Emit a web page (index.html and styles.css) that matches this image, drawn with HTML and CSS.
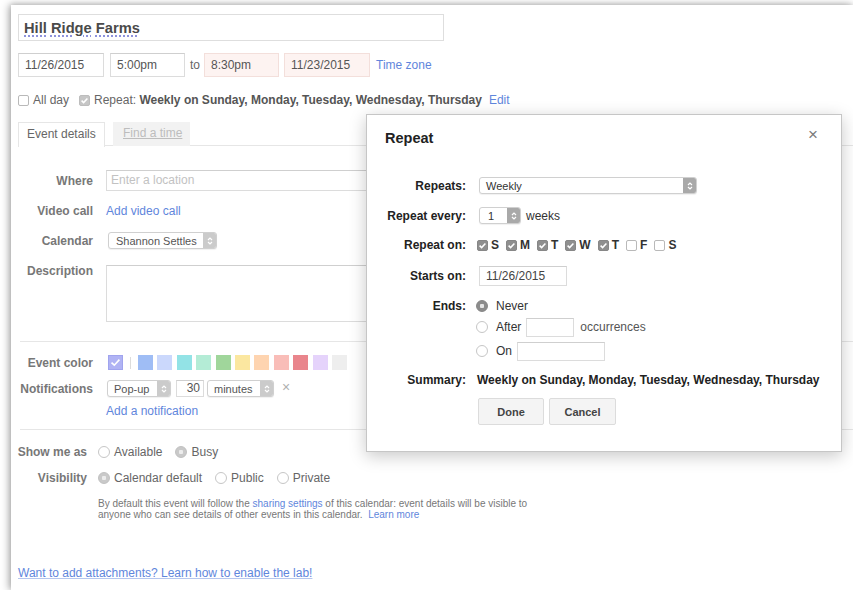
FILE: index.html
```html
<!DOCTYPE html>
<html>
<head>
<meta charset="utf-8">
<title>Hill Ridge Farms</title>
<link rel="stylesheet" href="styles.css">
</head>
<body>
<div class="window">
  <div class="title-box"><span class="title"><span class="sp">Hill</span> <span class="sp">Ridge</span> <span class="sp">Farms</span></span></div>

  <div class="when">
    <div class="field date">11/26/2015</div>
    <div class="field time">5:00pm</div>
    <span class="to">to</span>
    <div class="field time warn">8:30pm</div>
    <div class="field date warn">11/23/2015</div>
    <a class="link tz">Time zone</a>
  </div>

  <div class="recur">
    <span class="check"></span><span class="allday">All day</span>
    <span class="check on light"><svg viewBox="0 0 11 11" width="11" height="11"><path d="M2.6 5.6 L4.6 7.6 L8.4 3.4" fill="none" stroke="#fff" stroke-width="1.5"/></svg></span>
    <span class="rep">Repeat: <b>Weekly on Sunday, Monday, Tuesday, Wednesday, Thursday</b></span>
    <a class="link edit">Edit</a>
  </div>

  <div class="tabs">
    <div class="tab active">Event details</div>
    <div class="tab idle"><span>Find a time</span></div>
  </div>

  <div class="details">
    <div class="row r-where">
      <span class="label">Where</span>
      <div class="field where">Enter a location</div>
    </div>
    <div class="row r-video">
      <span class="label">Video call</span>
      <a class="link">Add video call</a>
    </div>
    <div class="row r-cal">
      <span class="label">Calendar</span>
      <span class="select cal">Shannon Settles<span class="stepper"><svg viewBox="0 0 8 10" width="8" height="10"><path d="M2 4 L4 2 L6 4 M2 6 L4 8 L6 6" fill="none" stroke="#fff" stroke-width="1.2"/></svg></span></span>
    </div>
    <div class="row r-desc">
      <span class="label">Description</span>
      <div class="field desc"></div>
    </div>

    <div class="rule r1"></div>

    <div class="row r-color">
      <span class="label">Event color</span>
      <span class="swatch-pick"><svg viewBox="0 0 15 15" width="15" height="15"><path d="M3.5 7.6 L6.3 10.2 L11.4 4.6" fill="none" stroke="#fff" stroke-width="1.6"/></svg></span>
      <span class="sep"></span>
      <span class="swatches">
        <span class="sw" style="background:#9fbdf5"></span>
        <span class="sw" style="background:#cbd8fc"></span>
        <span class="sw" style="background:#93e3e6"></span>
        <span class="sw" style="background:#b4ecd6"></span>
        <span class="sw" style="background:#a0d69b"></span>
        <span class="sw" style="background:#fbe7a0"></span>
        <span class="sw" style="background:#fed4b0"></span>
        <span class="sw" style="background:#f9bdb8"></span>
        <span class="sw" style="background:#e9858c"></span>
        <span class="sw" style="background:#e5d3fb"></span>
        <span class="sw" style="background:#eeeeee"></span>
      </span>
    </div>
    <div class="row r-notif">
      <span class="label">Notifications</span>
      <span class="select popup">Pop-up<span class="stepper"><svg viewBox="0 0 8 10" width="8" height="10"><path d="M2 4 L4 2 L6 4 M2 6 L4 8 L6 6" fill="none" stroke="#fff" stroke-width="1.2"/></svg></span></span>
      <span class="field num">30</span>
      <span class="select minutes">minutes<span class="stepper"><svg viewBox="0 0 8 10" width="8" height="10"><path d="M2 4 L4 2 L6 4 M2 6 L4 8 L6 6" fill="none" stroke="#fff" stroke-width="1.2"/></svg></span></span>
      <span class="remove">×</span>
    </div>
    <div class="row r-add">
      <span class="label"></span>
      <a class="link">Add a notification</a>
    </div>

    <div class="rule r2"></div>

    <div class="row2 r-show">
      <span class="label">Show me as</span>
      <span class="radio"></span><span class="opt">Available</span>
      <span class="radio on"></span><span class="opt">Busy</span>
    </div>
    <div class="row2 r-vis">
      <span class="label">Visibility</span>
      <span class="radio on"></span><span class="opt">Calendar default</span>
      <span class="radio"></span><span class="opt">Public</span>
      <span class="radio"></span><span class="opt">Private</span>
    </div>
    <p class="info">By default this event will follow the <a class="link">sharing settings</a> of this calendar: event details will be visible to<br>anyone who can see details of other events in this calendar.&nbsp; <a class="link">Learn more</a></p>

    <a class="link lab">Want to add attachments? Learn how to enable the lab!</a>
  </div>
</div>

<div class="dialog">
  <div class="dlg-head">
    <span class="dlg-title">Repeat</span>
    <span class="dlg-close">×</span>
  </div>
  <div class="dlg-body">
    <div class="drow d-repeats">
      <span class="dlabel">Repeats:</span>
      <span class="select dsel weekly">Weekly<span class="stepper dark"><svg viewBox="0 0 8 10" width="8" height="10"><path d="M2 4 L4 2 L6 4 M2 6 L4 8 L6 6" fill="none" stroke="#fff" stroke-width="1.2"/></svg></span></span>
    </div>
    <div class="drow d-every">
      <span class="dlabel">Repeat every:</span>
      <span class="select dsel every">1<span class="stepper dark"><svg viewBox="0 0 8 10" width="8" height="10"><path d="M2 4 L4 2 L6 4 M2 6 L4 8 L6 6" fill="none" stroke="#fff" stroke-width="1.2"/></svg></span></span>
      <span class="dtext">weeks</span>
    </div>
    <div class="drow d-on">
      <span class="dlabel">Repeat on:</span>
      <span class="days">
        <span class="day"><span class="check on"><svg viewBox="0 0 11 11" width="11" height="11"><path d="M2.6 5.6 L4.6 7.6 L8.4 3.4" fill="none" stroke="#fff" stroke-width="1.5"/></svg></span>S</span>
        <span class="day"><span class="check on"><svg viewBox="0 0 11 11" width="11" height="11"><path d="M2.6 5.6 L4.6 7.6 L8.4 3.4" fill="none" stroke="#fff" stroke-width="1.5"/></svg></span>M</span>
        <span class="day"><span class="check on"><svg viewBox="0 0 11 11" width="11" height="11"><path d="M2.6 5.6 L4.6 7.6 L8.4 3.4" fill="none" stroke="#fff" stroke-width="1.5"/></svg></span>T</span>
        <span class="day"><span class="check on"><svg viewBox="0 0 11 11" width="11" height="11"><path d="M2.6 5.6 L4.6 7.6 L8.4 3.4" fill="none" stroke="#fff" stroke-width="1.5"/></svg></span>W</span>
        <span class="day"><span class="check on"><svg viewBox="0 0 11 11" width="11" height="11"><path d="M2.6 5.6 L4.6 7.6 L8.4 3.4" fill="none" stroke="#fff" stroke-width="1.5"/></svg></span>T</span>
        <span class="day"><span class="check"></span>F</span>
        <span class="day"><span class="check"></span>S</span>
      </span>
    </div>
    <div class="drow d-start">
      <span class="dlabel">Starts on:</span>
      <span class="field start">11/26/2015</span>
    </div>
    <div class="drow d-ends">
      <span class="dlabel">Ends:</span>
      <div class="ends">
        <div class="end e-never"><span class="radio dark"></span><span class="dtext">Never</span></div>
        <div class="end e-after"><span class="radio"></span><span class="dtext">After</span><span class="field occ"></span><span class="dtext soft">occurrences</span></div>
        <div class="end e-on"><span class="radio"></span><span class="dtext">On</span><span class="field ondate"></span></div>
      </div>
    </div>
    <div class="drow d-sum">
      <span class="dlabel">Summary:</span>
      <b class="sumtext">Weekly on Sunday, Monday, Tuesday, Wednesday, Thursday</b>
    </div>
    <div class="drow d-btns">
      <span class="dlabel"></span>
      <span class="btn">Done</span>
      <span class="btn">Cancel</span>
    </div>
  </div>
</div>
</body>
</html>
```

FILE: styles.css
```css
* { box-sizing: border-box; }

html, body {
  margin: 0;
  height: 100%;
}

body {
  background: #fff;
  font-family: "Liberation Sans", Arial, Helvetica, sans-serif;
  font-size: 12px;
  color: #555;
  overflow: hidden;
}

a { cursor: pointer; }

.link {
  color: #5f86dc;
  text-decoration: none;
}

/* ---------- event editor window ---------- */
.window {
  margin: 5px 0 0 11px;
  width: 842px;
  height: 585px;
  background: #fff;
  box-shadow: -2px 0 8px rgba(0, 0, 0, 0.32), 0 -1px 5px rgba(0, 0, 0, 0.12);
  padding: 9px 0 0 7px;
  overflow: hidden;
}

.field {
  border: 1px solid #dcdcdc;
  border-top-color: #cfcfcf;
  background: #fff;
}

.title-box {
  width: 426px;
  height: 27px;
  border: 1px solid #dedede;
  padding-left: 5px;
  display: flex;
  align-items: center;
}

.title {
  font-size: 14.7px;
  font-weight: bold;
  color: #4a4a4a;
}

.sp {
  text-decoration: underline dotted #8e92dc;
  text-decoration-thickness: 1.5px;
  text-underline-offset: 3px;
}

/* start / end row */
.when {
  display: flex;
  align-items: center;
  margin-top: 12px;
  height: 24px;
}

.when .field {
  height: 24px;
  line-height: 22px;
  padding: 0 6px;
  color: #555;
}

.when .date { width: 86px; }
.when .time { width: 75px; margin-left: 6px; }
.when .warn {
  background: #fdf3f1;
  border-color: #f3dfdb;
}
.when .time.warn { margin-left: 0; }
.when .date.warn { margin-left: 5px; }
.to { margin: 0 4px 0 5px; color: #666; }
.tz { margin-left: 6px; }

/* all day / repeat row */
.recur {
  display: flex;
  align-items: center;
  margin-top: 16px;
  height: 14px;
  color: #666;
}

.check {
  width: 11px;
  height: 11px;
  border: 1px solid #b9b9b9;
  border-radius: 2px;
  background: #fff;
  display: inline-flex;
  flex: none;
}

.check svg { display: block; margin: -1px; }

.check.on {
  background: #8f8f8f;
  border-color: #878787;
}

.check.on.light {
  background: #c6c6c6;
  border-color: #bdbdbd;
}

.allday { margin: 0 10px 0 4px; }
.rep { margin-left: 4px; }
.rep b { color: #555; }
.edit { margin-left: 7px; }

/* tabs */
.tabs {
  display: flex;
  margin-top: 15px;
  height: 24px;
  border-bottom: 1px solid #e6e6e6;
}

.tab {
  height: 24px;
  line-height: 22px;
  white-space: nowrap;
  flex: none;
}

.tab.active {
  width: 87px;
  padding-left: 8px;
  border: 1px solid #e6e6e6;
  border-bottom: none;
  background: #fff;
  height: 25px;
  color: #666;
}

.tab.idle {
  width: 77px;
  margin-left: 8px;
  background: #f2f2f2;
  color: #bdbdbd;
  padding-left: 10px;
}

.tab.idle span { text-decoration: underline; }

/* form rows */
.row {
  display: flex;
  align-items: center;
}

.row .label {
  width: 75px;
  flex: none;
  margin-right: 13px;
  text-align: right;
  font-weight: bold;
  color: #777;
  white-space: nowrap;
}

.r-where { margin-top: 24px; height: 21px; }
.where {
  width: 520px;
  height: 21px;
  line-height: 19px;
  padding-left: 4px;
  color: #c2c2c2;
}

.r-video { margin-top: 12px; height: 16px; }
.r-cal { margin-top: 13px; height: 17px; }

.select {
  display: inline-flex;
  align-items: center;
  justify-content: space-between;
  height: 17px;
  border: 1px solid #d0d0d0;
  border-radius: 3px;
  background: #fff;
  font-size: 11px;
  color: #555;
  padding-left: 6px;
  overflow: hidden;
  box-shadow: 0 1px 1px rgba(0, 0, 0, 0.06);
  flex: none;
}

.stepper {
  align-self: stretch;
  width: 13px;
  background: #cbcbcb;
  display: flex;
  align-items: center;
  justify-content: center;
}

.stepper.dark { background: #a9a9a9; }

.cal { width: 109px; margin-left: 2px; padding-left: 7px; }

.r-desc { margin-top: 16px; align-items: flex-start; }
.r-desc .label { margin-top: -1px; }
.desc { width: 520px; height: 57px; }

.rule {
  height: 1px;
  background: #e6e6e6;
  margin-left: 2px;
}

.rule.r1 { margin-top: 19px; }

.r-color { margin-top: 13px; height: 15px; }
.r-color .label { margin-right: 15px; }

.swatch-pick {
  width: 15px;
  height: 15px;
  background: #b0b3f4;
  border: 1px solid #a0a4ee;
  display: inline-flex;
}
.swatch-pick svg { margin: -1px; }

.sep {
  width: 1px;
  height: 12px;
  background: #dcdcdc;
  margin: 0 7px 0 7px;
}

.swatches { display: flex; gap: 4.4px; }
.sw { width: 15px; height: 15px; display: block; }

.r-notif { margin-top: 10px; height: 17px; }
.r-notif .label { margin-right: 14px; }
.popup { width: 64px; }
.num {
  width: 28px;
  height: 17px;
  margin-left: 5px;
  text-align: right;
  padding-right: 3px;
  line-height: 15px;
  font-size: 12px;
  color: #555;
}
.minutes { width: 67px; margin-left: 3px; }
.remove {
  margin-left: 8px;
  color: #b0b0b0;
  font-size: 14px;
  line-height: 14px;
  margin-top: -4px;
}

.r-add { margin-top: 7px; height: 14px; }
.rule.r2 { margin-top: 11px; }

/* lower section, narrower label column */
.row2 {
  display: flex;
  align-items: center;
  height: 14px;
  color: #666;
}

.row2 .label {
  width: 75px;
  margin-left: -6px;
  flex: none;
  margin-right: 11px;
  text-align: right;
  font-weight: bold;
  color: #777;
  white-space: nowrap;
}

.r-show { margin-top: 15px; }
.r-vis { margin-top: 12px; }

.radio {
  width: 12px;
  height: 12px;
  border-radius: 50%;
  border: 1px solid #c6c6c6;
  background: #fff;
  flex: none;
}

.radio.on {
  background: radial-gradient(circle, #ececec 0 2px, #c9c9c9 2.5px);
  border-color: #c0c0c0;
}

.radio.dark {
  background: radial-gradient(circle, #e6e6e6 0 2px, #8c8c8c 2.5px);
  border-color: #858585;
}

.opt { margin: 0 13px 0 4px; }

.info {
  margin: 13px 0 0 80px;
  font-size: 10px;
  line-height: 11px;
  color: #777;
}

.lab {
  display: inline-block;
  margin-top: 46px;
  text-decoration: underline;
  text-decoration-color: #b5c6ef;
}

/* ---------- repeat dialog ---------- */
.dialog {
  position: absolute;
  left: 366px;
  top: 114px;
  width: 476px;
  height: 338px;
  background: #fff;
  border: 1px solid #c6c6c6;
  box-shadow: 0 4px 16px rgba(0, 0, 0, 0.22);
}

.dlg-head {
  display: flex;
  justify-content: space-between;
  align-items: flex-start;
  padding: 14px 23px 0 18px;
  height: 62px;
}

.dlg-title {
  font-size: 14.5px;
  line-height: 18px;
  font-weight: bold;
  color: #222;
}

.dlg-close {
  font-size: 17px;
  line-height: 10px;
  color: #7a7a7a;
  margin-top: 1px;
}

.dlg-body { display: flex; flex-direction: column; }

.drow {
  display: flex;
  align-items: center;
  color: #333;
}

.dlabel {
  width: 99px;
  flex: none;
  margin-right: 11px;
  text-align: right;
  font-weight: bold;
  color: #222;
}

.dtext { color: #333; }
.dtext.soft { color: #555; }

.d-repeats { height: 17px; }
.dsel { color: #333; margin-left: 2px; }
.weekly { width: 218px; }

.d-every { margin-top: 13px; height: 17px; }
.every { width: 42px; padding-left: 8px; }
.d-every .dtext { margin-left: 5px; }

.d-on { margin-top: 12px; height: 18px; }
.days { display: flex; }
.day {
  display: inline-flex;
  align-items: center;
  gap: 3px;
  margin-right: 7px;
  color: #333;
  font-weight: bold;
}

.d-start { margin-top: 12px; height: 20px; }
.start {
  width: 88px;
  height: 20px;
  margin-left: 2px;
  line-height: 18px;
  padding-left: 6px;
  color: #444;
}

.d-ends { margin-top: 11px; align-items: flex-start; }
.d-ends .dlabel { line-height: 18px; }
.ends { display: flex; flex-direction: column; margin-left: -1px; }
.end { display: flex; align-items: center; }
.end .radio { margin-right: 8px; }
.e-never { height: 18px; }
.e-after { height: 20px; margin-top: 2px; }
.e-on { height: 20px; margin-top: 4px; }
.occ { width: 48px; height: 19px; margin: 0 6px 0 5px; }
.ondate { width: 88px; height: 19px; margin-left: 5px; }

.d-sum { margin-top: 10px; height: 18px; }
.sumtext { color: #222; }

.d-btns { margin-top: 9px; height: 27px; }
.btn {
  display: inline-flex;
  align-items: center;
  justify-content: center;
  height: 27px;
  width: 66px;
  margin-left: 1px;
  margin-right: 5px;
  background: #f4f4f4;
  border: 1px solid #dcdcdc;
  border-radius: 2px;
  font-size: 11px;
  font-weight: bold;
  color: #444;
}
.btn + .btn { width: 67px; margin-left: 0; }
```
